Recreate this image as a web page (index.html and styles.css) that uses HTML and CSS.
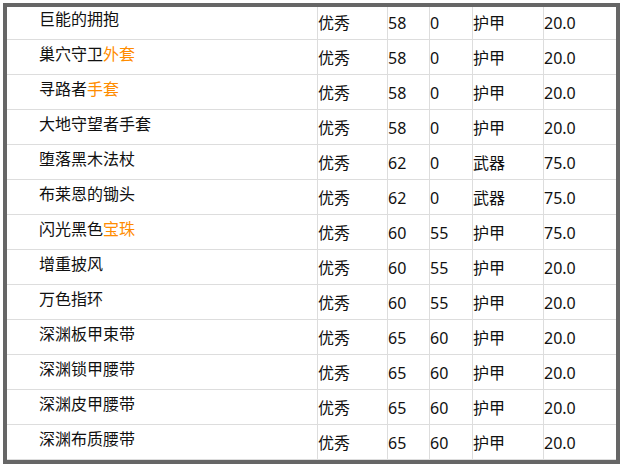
FILE: index.html
```html
<!DOCTYPE html>
<html lang="zh-CN">
<head>
<meta charset="utf-8">
<title>装备列表</title>
<link rel="stylesheet" href="styles.css">
</head>
<body>
<div class="frame">
  <div class="table">
    <div class="row"><div class="cell name">巨能的拥抱</div><div class="cell">优秀</div><div class="cell">58</div><div class="cell">0</div><div class="cell">护甲</div><div class="cell">20.0</div></div>
    <div class="row"><div class="cell name">巢穴守卫<span class="hl">外套</span></div><div class="cell">优秀</div><div class="cell">58</div><div class="cell">0</div><div class="cell">护甲</div><div class="cell">20.0</div></div>
    <div class="row"><div class="cell name">寻路者<span class="hl">手套</span></div><div class="cell">优秀</div><div class="cell">58</div><div class="cell">0</div><div class="cell">护甲</div><div class="cell">20.0</div></div>
    <div class="row"><div class="cell name">大地守望者手套</div><div class="cell">优秀</div><div class="cell">58</div><div class="cell">0</div><div class="cell">护甲</div><div class="cell">20.0</div></div>
    <div class="row"><div class="cell name">堕落黑木法杖</div><div class="cell">优秀</div><div class="cell">62</div><div class="cell">0</div><div class="cell">武器</div><div class="cell">75.0</div></div>
    <div class="row"><div class="cell name">布莱恩的锄头</div><div class="cell">优秀</div><div class="cell">62</div><div class="cell">0</div><div class="cell">武器</div><div class="cell">75.0</div></div>
    <div class="row"><div class="cell name">闪光黑色<span class="hl">宝珠</span></div><div class="cell">优秀</div><div class="cell">60</div><div class="cell">55</div><div class="cell">护甲</div><div class="cell">75.0</div></div>
    <div class="row"><div class="cell name">增重披风</div><div class="cell">优秀</div><div class="cell">60</div><div class="cell">55</div><div class="cell">护甲</div><div class="cell">20.0</div></div>
    <div class="row"><div class="cell name">万色指环</div><div class="cell">优秀</div><div class="cell">60</div><div class="cell">55</div><div class="cell">护甲</div><div class="cell">20.0</div></div>
    <div class="row"><div class="cell name">深渊板甲束带</div><div class="cell">优秀</div><div class="cell">65</div><div class="cell">60</div><div class="cell">护甲</div><div class="cell">20.0</div></div>
    <div class="row"><div class="cell name">深渊锁甲腰带</div><div class="cell">优秀</div><div class="cell">65</div><div class="cell">60</div><div class="cell">护甲</div><div class="cell">20.0</div></div>
    <div class="row"><div class="cell name">深渊皮甲腰带</div><div class="cell">优秀</div><div class="cell">65</div><div class="cell">60</div><div class="cell">护甲</div><div class="cell">20.0</div></div>
    <div class="row"><div class="cell name">深渊布质腰带</div><div class="cell">优秀</div><div class="cell">65</div><div class="cell">60</div><div class="cell">护甲</div><div class="cell">20.0</div></div>
  </div>
</div>
</body>
</html>
```

FILE: styles.css
```css
html, body {
  margin: 0;
  padding: 0;
  background: #ffffff;
}

body {
  font-family: "Noto Sans", "Noto Sans CJK SC", sans-serif;
  font-size: 16px;
  color: #111111;
}

.frame {
  margin: 3px;
  width: 617px;
  height: 461px;
  box-sizing: border-box;
  border: 4px solid #666666;
  overflow: hidden;
  background: #ffffff;
}

.table {
  margin-top: -2px;
}

.row {
  display: grid;
  grid-template-columns: 310px 70px 42px 43px 71px 73px;
  height: 35px;
  box-sizing: border-box;
  border-bottom: 1px solid #dddddd;
}

.cell {
  display: flex;
  align-items: center;
  border-left: 1px solid #dddddd;
  padding-left: 0;
  padding-top: 1px;
  line-height: 20px;
  white-space: nowrap;
}

.cell.name {
  border-left: none;
  padding-left: 32px;
  padding-top: 0;
  padding-bottom: 7px;
}

.hl {
  color: #ff8c00;
}
```
